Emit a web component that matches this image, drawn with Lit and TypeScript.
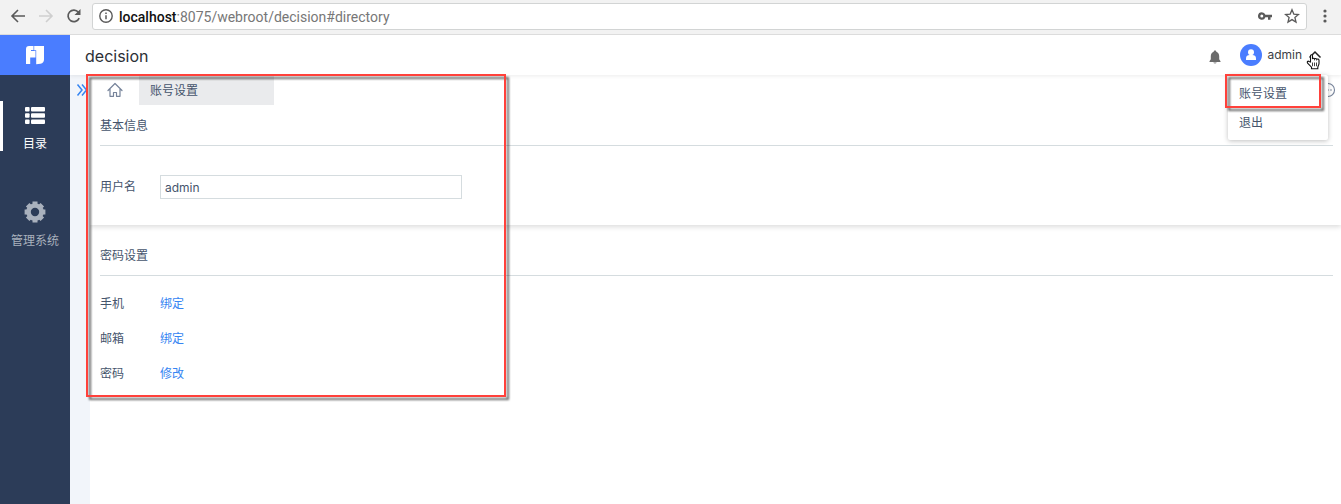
import { LitElement, html, css, svg } from "lit";
import { customElement, state } from "lit/decorators.js";

const icon = (name: string, size: number, box: number, body: unknown) => html`
  <svg class="icon ${name}" width=${size} height=${size} viewBox="0 0 ${box} ${box}" fill="none" aria-hidden="true">${body}</svg>
`;

const back = svg`<path d="M15 8H2.500M8 2L2 8l6 6" stroke="currentColor" stroke-width="1.600"/>`;
const forward = svg`<path d="M1 8h12.500M8 2l6 6-6 6" stroke="currentColor" stroke-width="1.600"/>`;
const reload = svg`<path d="M13.200 10.200A5.800 5.800 0 1 1 12.400 4.200" stroke="currentColor" stroke-width="1.700"/><path d="M14.500 1v6h-6z" fill="currentColor"/>`;
const info = svg`<circle cx="8" cy="8" r="6.200" stroke="currentColor" stroke-width="1.400"/><path d="M8 7.200v4M8 4.500v1.500" stroke="currentColor" stroke-width="1.500"/>`;
const key = svg`<path fill-rule="evenodd" fill="currentColor" d="M4.800 4.200a3.800 3.800 0 1 0 3.600 5H11v2.600h2.500V9.200H15V6.800H8.400a3.800 3.800 0 0 0-3.600-2.600zm0 2.300a1.500 1.500 0 1 1 0 3 1.500 1.500 0 0 1 0-3z"/>`;
const star = svg`<path d="M8 1.800l1.800 4.300 4.700.4-3.600 3 1.100 4.600L8 11.600l-4 2.500 1.100-4.600-3.600-3 4.700-.4z" stroke="currentColor" stroke-width="1.300"/>`;
const dots = svg`<g fill="currentColor"><circle cx="8" cy="3" r="1.600"/><circle cx="8" cy="8" r="1.600"/><circle cx="8" cy="13" r="1.600"/></g>`;
const logo = svg`<path fill="#fff" d="M4 1h4.500v4H6v1h4.500v6.500H5.200V19H1V4q0-3 3-3z"/><path fill="#fff" d="M9.200 1H19v13.500q0 3.500-3.500 4.200l-4.300.6V5.200h-2z"/>`;
const list = svg`<g fill="#fff"><rect x="0" y="1" width="4.600" height="4.600" rx="1"/><rect x="6" y="1" width="14" height="4.600" rx="1"/><rect x="0" y="7.200" width="4.600" height="4.600" rx="1"/><rect x="6" y="7.200" width="14" height="4.600" rx="1"/><rect x="0" y="13.400" width="4.600" height="4.600" rx="1"/><rect x="6" y="13.400" width="14" height="4.600" rx="1"/></g>`;
const gear = svg`<circle cx="11" cy="11" r="6.500" stroke="currentColor" stroke-width="4.600"/><g stroke="currentColor" stroke-width="5">${[0, 45, 90, 135].map(
  (a) => svg`<path transform="rotate(${a} 11 11)" d="M11 .6v2.600M11 18.800v2.600"/>`
)}</g>`;
const bell = svg`<path fill="currentColor" d="M8 1.500c.8 0 1.300.5 1.300 1.200 2 .6 2.900 2.300 2.900 4.500v3l1.300 2v.8h-11v-.8l1.300-2v-3c0-2.200.9-3.900 2.900-4.500 0-.7.500-1.200 1.300-1.200zM6.500 13.500h3v.5q-1.500.8-3 0z"/>`;
const user = svg`<circle cx="11" cy="11" r="11" fill="#4a7dff"/><circle cx="11" cy="8.300" r="3" fill="#fff"/><path fill="#fff" d="M6 16v-1.800c0-2 1.700-3.200 3.600-3.200h2.800c1.900 0 3.600 1.200 3.600 3.200V16z"/>`;
const chevrons = svg`<path d="M1.500 1.500L6 7l-4.500 5.500M6 1.500L10.500 7 6 12.500" stroke="currentColor" stroke-width="1.500"/>`;
const home = svg`<path d="M1 8.500L8 1.500l7 7M3 7v7.300h3.500v-3.800h3v3.800H13V7" stroke="currentColor" stroke-width="1.200" stroke-linejoin="round" stroke-linecap="round"/>`;
const more = svg`<circle cx="8" cy="8" r="6.500" stroke="currentColor" stroke-width="1.100"/><g fill="currentColor"><circle cx="5" cy="8" r=".8"/><circle cx="8" cy="8" r=".8"/><circle cx="11" cy="8" r=".8"/></g>`;
const hand = svg`<path d="M5.500 7.500L11 2l5.500 5.500" stroke="#222" stroke-width="1.500"/><path d="M6.500 12V5.800c0-1.500 2-1.500 2 0V9c.3-1 2-1 2.200.1.400-.9 1.900-.8 2.100.3.400-.7 2.200-.5 2.200.8v3.300c0 1.700-1.200 2.300-1.200 4v1.200H7.500v-1.500L3.600 13.200c-1-1.500.4-2.500 1.400-1.700z" fill="#fff" stroke="#111" stroke-width="1.100"/><path d="M8.500 12.500v3.700M10.500 12.500v3.700M12.500 12.500v3.700" stroke="#111" stroke-width=".8"/>`;

@customElement("app-root")
export class AppRoot extends LitElement {
  @state() private username = "admin";

  private bindings = [
    { label: "手机", action: "绑定" },
    { label: "邮箱", action: "绑定" },
    { label: "密码", action: "修改" },
  ];

  static styles = css`
    :host {
      display: flex;
      flex-direction: column;
      min-height: 100vh;
      background: #fff;
      color: #45546c;
      font: 12px/20px Inter, "Noto Sans CJK SC", sans-serif;
    }
    * { box-sizing: border-box; }
    button { font: inherit; color: inherit; background: none; border: 0; padding: 0; margin: 0; text-align: left; display: flex; align-items: center; }
    a { text-decoration: none; color: inherit; }
    .icon { display: block; flex: none; }

    .browser { display: flex; align-items: center; height: 35px; padding: 0 8px 2px 10px; gap: 12px; background: #f2f2f2; border-bottom: 1px solid #dcdcdc; color: #5a5a5a; }
    .off { color: #cfcfcf; }
    .address { flex: 1; min-width: 0; height: 27px; display: flex; align-items: center; gap: 5px; margin: 0 -2px; padding: 0 6px 0 5px; background: #fff; border: 1px solid #d2d4d4; border-radius: 3px; }
    .url { flex: 1; min-width: 0; padding-top: 1px; font: 14px/20px Roboto, sans-serif; color: #777; white-space: nowrap; overflow: hidden; }
    .host { color: #111; font-weight: 500; }
    .keys { display: flex; gap: 11px; }

    .shell { flex: 1; display: flex; }
    .side { flex: none; width: 70px; background: #2c3c58; color: #a9b1bd; }
    .logo { display: flex; align-items: center; justify-content: center; height: 40px; background: #4a7dff; }
    .nav { display: flex; flex-direction: column; gap: 45px; padding-top: 26px; }
    .entry { display: flex; flex-direction: column; align-items: center; gap: 8px; width: 100%; height: 50px; padding-top: 5px; border: solid transparent; border-width: 0 3px; }
    .active { color: #fff; border-left-color: #fff; }

    .main { flex: 1; min-width: 0; display: flex; flex-direction: column; }
    .top { position: relative; z-index: 2; display: flex; align-items: center; height: 40px; padding: 0 39px 0 15px; background: #fff; box-shadow: 0 1px 4px rgba(0, 0, 0, 0.08); clip-path: inset(0 0 -100px 0); }
    .title { flex: 1; margin: 0; padding-top: 1px; font-size: 16px; font-weight: 400; color: #2c2f36; }
    .bell { padding-top: 4px; color: #6b6b6b; }
    .account { display: flex; align-items: center; gap: 5px; margin-left: 17px; color: #3c3f45; }
    .cursor { position: absolute; right: 17px; top: 15px; z-index: 3; }
    .menu { position: absolute; top: 40px; right: 13px; width: 100px; height: 65px; padding-top: 4px; background: #fff; color: #45546c; border-radius: 2px; box-shadow: 0 1px 5px rgba(0, 0, 0, 0.25); }
    .item { width: 100%; height: 29px; padding-left: 11px; }
    .mark { position: absolute; border: 2px solid #ff413b; filter: drop-shadow(3px 3px 1px rgba(0, 0, 0, 0.6)); pointer-events: none; }
    .menumark { left: -3px; top: -1px; width: 96px; height: 34px; }

    .body { flex: 1; display: flex; }
    .rail { flex: none; width: 20px; background: #f2f5fa; padding: 8px 0 0 6px; color: #3685f2; }
    .page { position: relative; flex: 1; min-width: 0; }
    .pagemark { left: -4px; top: -1px; width: 420px; height: 323px; z-index: 3; }
    .tabs { display: flex; align-items: center; height: 30px; padding-right: 5px; }
    .home { width: 49px; height: 30px; justify-content: center; color: #76839a; }
    .tab { width: 135px; height: 30px; padding: 2px 0 0 11px; background: #eaebed; color: #45546c; }
    .more { margin-left: auto; color: #76839a; }
    .section { padding: 0 8px 0 10px; }
    .basic { padding-bottom: 26px; box-shadow: 0 2px 5px rgba(0, 0, 0, 0.14); clip-path: inset(0 0 -10px 0); }
    .security { padding-top: 10px; }
    .heading { margin: 0; height: 41px; padding: 11px 0 9px; border-bottom: 1px solid #d5dcdf; font-size: 12px; font-weight: 400; }
    .field { display: flex; align-items: center; padding-top: 29px; }
    .label { width: 60px; }
    .input { width: 302px; height: 24px; padding: 0 4px; border: 1px solid #d5dcdf; border-radius: 0; outline: 0; font: inherit; color: #45546c; background: #fff; }
    .rows { padding-top: 10px; }
    .row { display: flex; align-items: center; height: 35px; }
    .link { color: #3685f2; }
  `;

  render() {
    return html`
      <div class="browser">
        <button aria-label="Back">${icon("back", 16, 16, back)}</button>
        <button class="off" aria-label="Forward" disabled>${icon("forward", 16, 16, forward)}</button>
        <button aria-label="Reload">${icon("reload", 16, 16, reload)}</button>
        <div class="address">
          ${icon("info", 16, 16, info)}
          <div class="url"><span class="host">localhost</span>:8075/webroot/decision#directory</div>
          <div class="keys">
            <button aria-label="Passwords">${icon("key", 16, 16, key)}</button>
            <button aria-label="Bookmark">${icon("star", 16, 16, star)}</button>
          </div>
        </div>
        <button aria-label="Menu">${icon("dots", 16, 16, dots)}</button>
      </div>
      <div class="shell">
        <aside class="side">
          <div class="logo">${icon("brand", 20, 20, logo)}</div>
          <nav class="nav">
            <button class="entry active">${icon("list", 20, 20, list)}<span>目录</span></button>
            <button class="entry">${icon("gear", 22, 22, gear)}<span>管理系统</span></button>
          </nav>
        </aside>
        <div class="main">
          <header class="top">
            <h1 class="title">decision</h1>
            <button class="bell" aria-label="Notifications">${icon("ring", 16, 16, bell)}</button>
            <button class="account">${icon("user", 22, 22, user)}<span>admin</span></button>
            <div class="cursor">${icon("hand", 20, 20, hand)}</div>
            <div class="menu">
              <button class="item">账号设置</button>
              <button class="item">退出</button>
              <div class="mark menumark"></div>
            </div>
          </header>
          <div class="body">
            <div class="rail"><button aria-label="Expand">${icon("chevrons", 14, 14, chevrons)}</button></div>
            <main class="page">
              <div class="mark pagemark"></div>
              <div class="tabs">
                <button class="home" aria-label="Home">${icon("house", 16, 16, home)}</button>
                <button class="tab">账号设置</button>
                <button class="more" aria-label="More">${icon("ellipsis", 16, 16, more)}</button>
              </div>
              <section class="section basic">
                <h2 class="heading">基本信息</h2>
                <div class="field">
                  <label class="label" for="username">用户名</label>
                  <input
                    class="input"
                    id="username"
                    type="text"
                    .value=${this.username}
                    @input=${(e: Event) => (this.username = (e.target as HTMLInputElement).value)}
                  />
                </div>
              </section>
              <section class="section security">
                <h2 class="heading">密码设置</h2>
                <div class="rows">
                  ${this.bindings.map(
                    (b) => html`<div class="row"><span class="label">${b.label}</span><a class="link" href="#">${b.action}</a></div>`
                  )}
                </div>
              </section>
            </main>
          </div>
        </div>
      </div>
    `;
  }
}
